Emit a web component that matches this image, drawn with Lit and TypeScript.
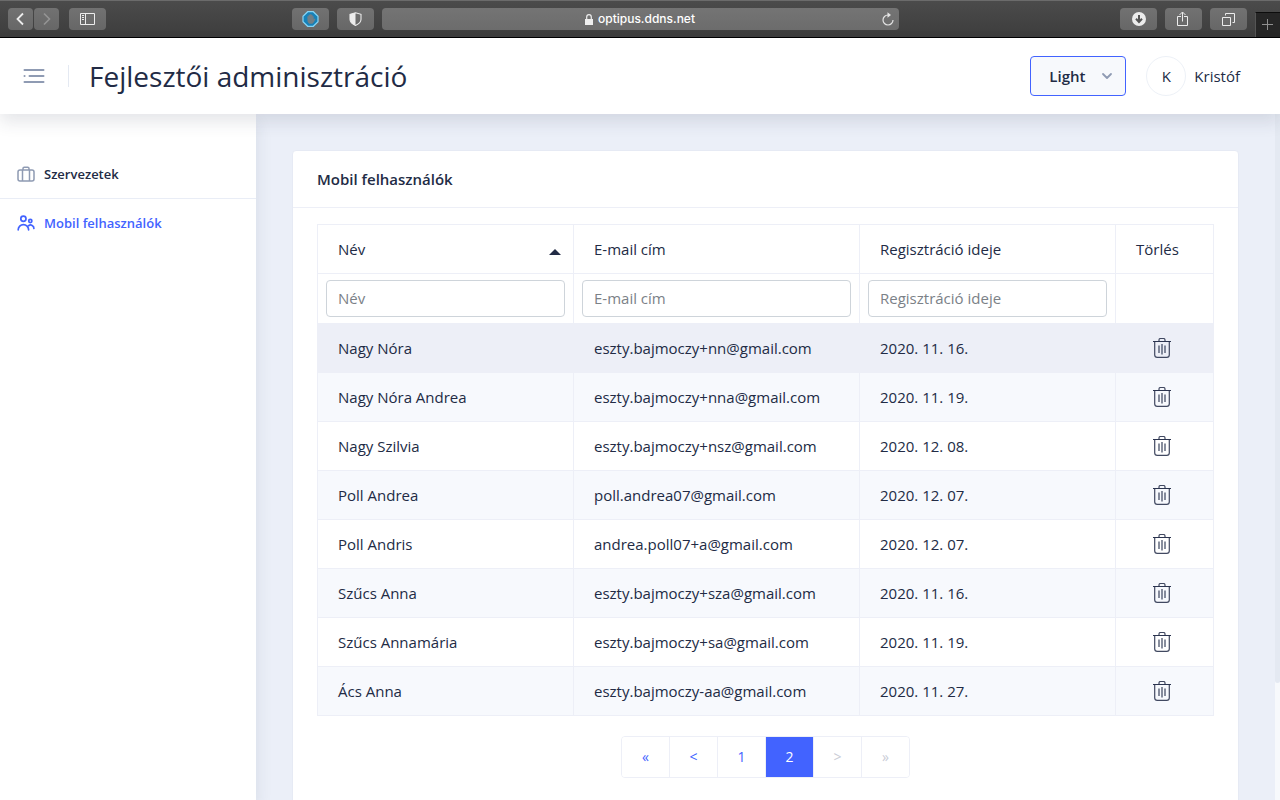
import { LitElement, html, css } from "lit";
import { customElement, property, state } from "lit/decorators.js";
import { classMap } from "lit/directives/class-map.js";

interface MobileUser {
  name: string;
  email: string;
  registered: string;
}

const USERS: MobileUser[] = [
  { name: "Nagy Nóra", email: "eszty.bajmoczy+nn@gmail.com", registered: "2020. 11. 16." },
  { name: "Nagy Nóra Andrea", email: "eszty.bajmoczy+nna@gmail.com", registered: "2020. 11. 19." },
  { name: "Nagy Szilvia", email: "eszty.bajmoczy+nsz@gmail.com", registered: "2020. 12. 08." },
  { name: "Poll Andrea", email: "poll.andrea07@gmail.com", registered: "2020. 12. 07." },
  { name: "Poll Andris", email: "andrea.poll07+a@gmail.com", registered: "2020. 12. 07." },
  { name: "Szűcs Anna", email: "eszty.bajmoczy+sza@gmail.com", registered: "2020. 11. 16." },
  { name: "Szűcs Annamária", email: "eszty.bajmoczy+sa@gmail.com", registered: "2020. 11. 19." },
  { name: "Ács Anna", email: "eszty.bajmoczy-aa@gmail.com", registered: "2020. 11. 27." },
];

@customElement("browser-bar")
export class BrowserBar extends LitElement {
  static styles = css`
    :host {
      display: block;
      font-family: Inter, "Open Sans", sans-serif;
    }
    .bar {
      box-sizing: border-box;
      height: 38px;
      display: grid;
      grid-template-columns: 1fr minmax(200px, 517px) 1fr;
      align-items: center;
      background: linear-gradient(#4b4b4b, #3d3d3d);
      border-top: 1px solid #6b6b6b;
      border-bottom: 1px solid #000;
    }
    .side {
      display: flex;
      align-items: center;
      gap: 8px;
      height: 36px;
      padding-left: 8px;
    }
    .left {
      padding-right: 8px;
    }
    .right {
      justify-content: flex-end;
    }
    .pair {
      display: flex;
      gap: 1px;
      margin-right: 2px;
    }
    .push {
      margin-left: auto;
    }
    .btn {
      display: flex;
      align-items: center;
      justify-content: center;
      width: 37px;
      height: 22px;
      padding: 0;
      border: 0;
      border-radius: 4px;
      background: linear-gradient(#727272, #676767);
      color: #ececec;
    }
    .narrow {
      width: 25px;
    }
    .faded {
      color: #949494;
    }
    .address {
      display: grid;
      grid-template-columns: 18px 1fr 18px;
      align-items: center;
      height: 22px;
      border-radius: 4px;
      background: linear-gradient(#747474, #6c6c6c);
      color: #fff;
      font-size: 12px;
      font-weight: 500;
      line-height: 20px;
    }
    .site {
      grid-column: 2;
      display: flex;
      align-items: center;
      justify-content: center;
      gap: 5px;
    }
    .reload {
      display: flex;
      padding: 0;
      border: 0;
      background: none;
      color: #e4e4e4;
    }
    .newtab {
      align-self: flex-end;
      display: flex;
      align-items: center;
      justify-content: center;
      width: 25px;
      height: 25px;
      padding: 0;
      border: 0;
      border-top: 1px solid #0c0c0c;
      border-left: 1px solid #555;
      background: #262626;
      color: #909090;
    }
  `;

  render() {
    return html`
      <div class="bar">
        <div class="side left">
          <div class="pair">
            <button class="btn narrow" aria-label="Vissza">
              <svg width="13" height="14" viewBox="0 0 13 14" fill="none" stroke="currentColor" stroke-width="1.8"><path d="M9 1.5 3.5 7 9 12.5" /></svg>
            </button>
            <button class="btn narrow faded" aria-label="Előre">
              <svg width="13" height="14" viewBox="0 0 13 14" fill="none" stroke="currentColor" stroke-width="1.6"><path d="M4 1.5 9.500 7 4 12.5" /></svg>
            </button>
          </div>
          <button class="btn" aria-label="Oldalsáv">
            <svg width="15" height="12" viewBox="0 0 15 12" fill="none" stroke="currentColor"><path d="M.5.5h14v11H.5zM5.5.5v11M2 2.500h2M2 4.500h2M2 6.500h2" /></svg>
          </button>
          <button class="btn push" aria-label="Hirdetésblokkoló">
            <svg width="17" height="16" viewBox="0 0 17 16">
              <path d="M5.700.7h5.600L16 5.200v5.600l-4.700 4.500H5.700L1 10.800V5.200z" fill="#1681b8" stroke="#86d4f5" stroke-width="1.2" />
              <path d="M5.400 8.500V5.200h1.200V3.700h1.300v-.5h1.300v.6h1.300v1.400h1.200v3.300l.9-.9.9.5-1.700 3.200-1.400 1.400H7.200L5.700 11z" fill="#727f86" />
            </svg>
          </button>
          <button class="btn" aria-label="Adatvédelmi jelentés">
            <svg width="13" height="14" viewBox="0 0 13 14"><path d="M6.500.7 12 2.300v5c0 3-2.300 4.800-5.500 6.100C3.300 12.100 1 10.300 1 7.300v-5z" fill="none" stroke="#ececec" stroke-width="1.100" /><path d="M6.500.7v12.700C3.300 12.100 1 10.300 1 7.300v-5z" fill="#ececec" /></svg>
          </button>
        </div>
        <div class="address">
          <div class="site">
            <svg width="8" height="11" viewBox="0 0 8 11"><path d="M0 5h8v6H0z" fill="#eee" /><path d="M1.700 5V3a2.300 2.300 0 0 1 4.600 0v2" fill="none" stroke="#eee" stroke-width="1.200" /></svg>
            <span>optipus.ddns.net</span>
          </div>
          <button class="reload" aria-label="Újratöltés">
            <svg width="13" height="14" viewBox="0 0 13 14" fill="none" stroke="currentColor" stroke-width="1.200"><path d="M7 3a5 5 0 1 0 5 5" /><path d="M6.500.300 10 3 6.500 5.700z" fill="currentColor" stroke="none" /></svg>
          </button>
        </div>
        <div class="side right">
          <button class="btn" aria-label="Letöltések">
            <svg width="14" height="14" viewBox="0 0 14 14"><circle cx="7" cy="7" r="7" fill="#ececec" /><path d="M7 3v6M4 6.800l3 3.200 3-3.200" fill="none" stroke="#555" stroke-width="2" /></svg>
          </button>
          <button class="btn" aria-label="Megosztás">
            <svg width="13" height="16" viewBox="0 0 13 16" fill="none" stroke="currentColor"><path d="M4 5.500H.5v9h10v-9H7M5.500 10.500V1.200M2.500 4l3-3 3 3" /></svg>
          </button>
          <button class="btn" aria-label="Lapok">
            <svg width="13" height="14" viewBox="0 0 13 14" fill="none" stroke="currentColor"><path d="M.5 5.500h8v8h-8zM3.500 3.500v-2h9v9h-2" /></svg>
          </button>
          <button class="newtab" aria-label="Új lap">
            <svg width="12" height="12" viewBox="0 0 12 12" stroke="currentColor"><path d="M5.500 0v11M0 5.500h11" /></svg>
          </button>
        </div>
      </div>
    `;
  }
}

@customElement("app-header")
export class AppHeader extends LitElement {
  static styles = css`
    :host {
      display: block;
      position: relative;
      z-index: 2;
    }
    .header {
      box-sizing: border-box;
      height: 76px;
      display: flex;
      align-items: center;
      justify-content: space-between;
      padding: 0 40px 0 23px;
      background: #fff;
      color: #222b45;
      box-shadow: 0 8px 16px 0 rgba(44, 51, 73, 0.12);
    }
    .brand,
    .actions,
    .user {
      display: flex;
      align-items: center;
    }
    .menu {
      display: flex;
      padding: 0;
      border: 0;
      background: none;
      color: #8f9bb3;
    }
    .title {
      margin: 0 0 0 23px;
      padding-left: 20px;
      font-size: 28px;
      font-weight: 400;
      line-height: 22px;
      border-left: 1px solid #e4e9f2;
    }
    .actions {
      gap: 20px;
    }
    .theme {
      display: grid;
      align-items: center;
    }
    .select {
      grid-area: 1 / 1;
      appearance: none;
      box-sizing: border-box;
      width: 96px;
      height: 40px;
      padding: 0 18px;
      border: 1px solid #4263ff;
      border-radius: 4px;
      background: #f7f9fc;
      color: #222b45;
      font: 600 15px/24px "Open Sans", sans-serif;
    }
    .chevron {
      grid-area: 1 / 1;
      justify-self: end;
      margin-right: 13px;
      pointer-events: none;
    }
    .user {
      gap: 8px;
      font-size: 15px;
      line-height: 20px;
    }
    .avatar {
      box-sizing: border-box;
      display: flex;
      align-items: center;
      justify-content: center;
      width: 40px;
      height: 40px;
      border: 1px solid #edf1f7;
      border-radius: 50%;
    }
  `;

  render() {
    return html`
      <header class="header">
        <div class="brand">
          <button class="menu" aria-label="Menü">
            <svg width="22" height="14" viewBox="0 0 22 14" stroke="currentColor" stroke-width="2" stroke-linecap="round"><path d="M1.500 1h19M6.500 7h14M1.500 7h.1M1.500 13h19" /></svg>
          </button>
          <h1 class="title">Fejlesztői adminisztráció</h1>
        </div>
        <div class="actions">
          <div class="theme">
            <select class="select" aria-label="Téma">
              <option selected>Light</option>
              <option>Dark</option>
            </select>
            <svg class="chevron" width="12" height="8" viewBox="0 0 12 8" fill="none" stroke="#8f9bb3" stroke-width="1.800" stroke-linecap="round" stroke-linejoin="round"><path d="m2 2 4 4 4-4" /></svg>
          </div>
          <div class="user">
            <span class="avatar">K</span>
            <span>Kristóf</span>
          </div>
        </div>
      </header>
    `;
  }
}

@customElement("app-sidebar")
export class AppSidebar extends LitElement {
  static styles = css`
    :host {
      display: block;
      background: #fff;
      box-shadow: 0 8px 16px 0 rgba(44, 51, 73, 0.1);
    }
    .list {
      margin: 0;
      padding: 36px 0 0;
      list-style: none;
    }
    .item + .item {
      border-top: 1px solid #e9edf6;
    }
    .link {
      display: flex;
      align-items: center;
      gap: 8px;
      height: 48px;
      padding: 0 16px;
      color: #222b45;
      font-size: 13px;
      font-weight: 600;
      line-height: 24px;
      text-decoration: none;
    }
    .icon {
      color: #8f9bb3;
    }
    .active,
    .active .icon {
      color: #4263ff;
    }
  `;

  render() {
    return html`
      <nav>
        <ul class="list">
          <li class="item">
            <a class="link" href="#szervezetek">
              <svg class="icon" width="20" height="20" viewBox="0 0 20 20" fill="none" stroke="currentColor" stroke-width="1.500"><rect x="2" y="6" width="16" height="11" rx="2" /><path d="M6.500 6v11M13.500 6v11M7 6V4.500a1.300 1.300 0 0 1 1.300-1.300h3.400A1.300 1.300 0 0 1 13 4.500V6" /></svg>
              <span>Szervezetek</span>
            </a>
          </li>
          <li class="item">
            <a class="link active" href="#mobil-felhasznalok" aria-current="page">
              <svg class="icon" width="20" height="20" viewBox="0 0 20 20" fill="none" stroke="currentColor" stroke-width="1.700" stroke-linecap="round"><circle cx="7.400" cy="5.700" r="2.600" /><circle cx="14.300" cy="8" r="1.600" /><path d="M2.200 16.800a5.200 5.200 0 0 1 10.400 0M12.600 12.700a3.300 3.300 0 0 1 5.300 2.800" /></svg>
              <span>Mobil felhasználók</span>
            </a>
          </li>
        </ul>
      </nav>
    `;
  }
}

@customElement("user-table")
export class UserTable extends LitElement {
  @property({ attribute: false }) users: MobileUser[] = [];

  static styles = css`
    :host {
      display: block;
    }
    .table {
      width: 100%;
      table-layout: fixed;
      border-collapse: collapse;
      font-size: 15px;
      line-height: 20px;
    }
    .name,
    .date {
      width: 256px;
    }
    .email {
      width: 286px;
    }
    .remove {
      width: 98px;
    }
    .cell {
      box-sizing: border-box;
      height: 49px;
      padding: 0 20px;
      border: 1px solid #edeff7;
      font-weight: 400;
      text-align: left;
    }
    .filter {
      height: 50px;
      padding: 0 8px;
    }
    .row:nth-child(even) {
      background: #f7f9fd;
    }
    .row:first-child {
      background: #edeff7;
    }
    .sort {
      display: flex;
      align-items: center;
      justify-content: space-between;
      width: 100%;
      padding: 0;
      border: 0;
      background: none;
      color: inherit;
      font: inherit;
    }
    .arrow {
      margin: 6px -8px 0 0;
    }
    .input {
      display: block;
      box-sizing: border-box;
      width: 100%;
      height: 37px;
      padding: 0 11px 2px;
      border: 1px solid #ced4da;
      border-radius: 4px;
      background: #fff;
      color: #222b45;
      font: 15px/20px "Open Sans", sans-serif;
    }
    .input::placeholder {
      color: #7b8187;
      opacity: 1;
    }
    .trash {
      display: flex;
      margin: 0 auto;
      padding: 0;
      border: 0;
      background: none;
      color: #2c3550;
    }
    .center {
      padding: 0 18px 0 12px;
    }
  `;

  private filter(label: string) {
    return html`<td class="cell filter"><input class="input" type="text" placeholder=${label} aria-label=${label} /></td>`;
  }

  render() {
    return html`
      <table class="table">
        <colgroup>
          <col class="name" />
          <col class="email" />
          <col class="date" />
          <col class="remove" />
        </colgroup>
        <thead>
          <tr>
            <th class="cell" aria-sort="ascending">
              <button class="sort">
                <span>Név</span>
                <svg class="arrow" width="12" height="6" viewBox="0 0 12 6"><path d="M0 6 6 0l6 6z" fill="#222b45" /></svg>
              </button>
            </th>
            <th class="cell">E-mail cím</th>
            <th class="cell">Regisztráció ideje</th>
            <th class="cell">Törlés</th>
          </tr>
          <tr>
            ${this.filter("Név")} ${this.filter("E-mail cím")} ${this.filter("Regisztráció ideje")}
            <td class="cell filter"></td>
          </tr>
        </thead>
        <tbody>
          ${this.users.map(
            (u) => html`
              <tr class="row">
                <td class="cell">${u.name}</td>
                <td class="cell">${u.email}</td>
                <td class="cell">${u.registered}</td>
                <td class="cell center">
                  <button class="trash" aria-label="Törlés: ${u.name}">
                    <svg width="18" height="20" viewBox="0 0 18 20" fill="none" stroke="currentColor">
                      <path d="M0 3.500h18" />
                      <path d="M6 3.500V2a1.500 1.500 0 0 1 1.500-1.500h3A1.500 1.500 0 0 1 12 2v1.500M1.700 3.500V17A2.500 2.500 0 0 0 4.200 19.400h9.600a2.500 2.500 0 0 0 2.500-2.400V3.500" stroke-width="1.200" opacity=".9" />
                      <path d="M6 7.500v7.500M9 6v10.500M12 7.500v7.500" stroke-width="1.500" opacity=".75" />
                    </svg>
                  </button>
                </td>
              </tr>
            `
          )}
        </tbody>
      </table>
    `;
  }
}

@customElement("page-switch")
export class PageSwitch extends LitElement {
  @state() private current = "2";

  static styles = css`
    :host {
      display: block;
    }
    .pages {
      display: flex;
      width: max-content;
      margin: 20px auto 0;
      padding: 0;
      list-style: none;
      border: 1px solid #edeff7;
      border-radius: 4px;
      overflow: hidden;
    }
    .page + .page {
      border-left: 1px solid #edeff7;
    }
    .button {
      display: block;
      width: 47px;
      height: 40px;
      padding: 0;
      border: 0;
      background: #fff;
      color: #4263ff;
      font: 14px/20px "Open Sans", sans-serif;
    }
    .button:disabled {
      color: #c9ccd6;
    }
    .button.current {
      background: #4263ff;
      color: #fff;
    }
  `;

  render() {
    const pages = ["«", "<", "1", "2", ">", "»"];
    return html`
      <nav aria-label="Lapozás">
        <ul class="pages">
          ${pages.map(
            (p) => html`<li class="page">
              <button class=${classMap({ button: true, current: p === this.current })} ?disabled=${p === ">" || p === "»"}>${p}</button>
            </li>`
          )}
        </ul>
      </nav>
    `;
  }
}

@customElement("app-root")
export class AppRoot extends LitElement {
  static styles = css`
    :host {
      display: flex;
      flex-direction: column;
      height: 100vh;
      overflow: hidden;
      background: #ebeff8;
      color: #222b45;
      font-family: "Open Sans", sans-serif;
    }
    .body {
      flex: 1;
      min-height: 0;
      display: grid;
      grid-template-columns: 256px minmax(0, 1fr) 5px;
    }
    .content {
      padding: 36px 36px 0;
      overflow: hidden;
      min-height: 0;
    }
    .card {
      box-sizing: border-box;
      min-height: 100%;
      padding-bottom: 36px;
      border: 1px solid #e6eaf4;
      border-radius: 4px;
      background: #fff;
    }
    .heading {
      margin: 0;
      padding: 16px 24px;
      border-bottom: 1px solid #edeff7;
      font-size: 15px;
      font-weight: 600;
      line-height: 24px;
    }
    .inside {
      padding: 16px 24px;
    }
    .track {
      background: #f7f9fc;
    }
    .thumb {
      height: 83%;
      border-radius: 0 0 3px 3px;
      background: #e4e9f2;
    }
  `;

  render() {
    return html`
      <browser-bar></browser-bar>
      <app-header></app-header>
      <div class="body">
        <app-sidebar></app-sidebar>
        <main class="content">
          <section class="card">
            <h2 class="heading">Mobil felhasználók</h2>
            <div class="inside">
              <user-table .users=${USERS}></user-table>
              <page-switch></page-switch>
            </div>
          </section>
        </main>
        <div class="track"><div class="thumb"></div></div>
      </div>
    `;
  }
}
